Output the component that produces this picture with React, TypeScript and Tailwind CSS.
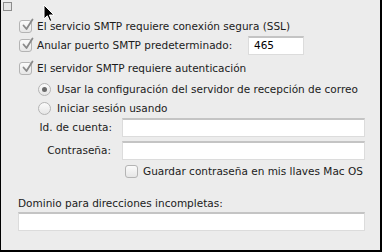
import React from "react";

const Check = ({ checked }: { checked?: boolean }) => (
  <span className="relative flex h-[13px] w-[13px] shrink-0 items-center justify-center rounded-[3px] border border-[#b4b4b4] bg-gradient-to-b from-[#fbfbfb] to-[#e6e6e6]">
    {checked && (
      <svg viewBox="0 0 14 14" className="absolute -top-[3px] left-[1px] h-[14px] w-[14px]">
        <path d="M2.5 7.5 L5.5 11 L11.5 1.5" fill="none" stroke="#8a8a8a" strokeWidth="1.8" strokeLinecap="round" strokeLinejoin="round" />
      </svg>
    )}
  </span>
);

const Radio = ({ checked }: { checked?: boolean }) => (
  <span className="flex h-[13px] w-[13px] shrink-0 items-center justify-center rounded-full border border-[#b4b4b4] bg-gradient-to-b from-[#fbfbfb] to-[#e6e6e6]">
    {checked && <span className="h-[5px] w-[5px] rounded-full bg-[#6a6a6a]" />}
  </span>
);

const Field = ({ className, value }: { className: string; value?: string }) => (
  <div className={`h-[19px] shrink-0 border border-[#dcdcdc] border-t-2 border-t-[#c4c4c4] bg-white px-[5px] text-[10.5px] leading-[15px] text-black ${className}`}>
    {value}
  </div>
);

export default function App() {
  return (
    <div
      className="relative h-[252px] w-[382px] overflow-hidden border-b-2 border-l border-r-2 border-black bg-[#ececec] text-[10.5px] text-[#1b1b1b]"
      style={{ fontFamily: '"DejaVu Sans", Verdana, sans-serif' }}
    >
      <div className="absolute left-[2px] top-[2px] h-[9px] w-[9px] border border-[#8c8c8c] bg-[#e4e4e4]" />
      <svg viewBox="0 0 12 19" className="absolute left-[42px] top-[4px] h-[19px] w-[12px]">
        <path d="M1 1 L1 15 L4.3 11.8 L6.8 17.5 L8.8 16.6 L6.4 11 L11 11 Z" fill="#000" stroke="#fff" strokeWidth="1" strokeLinejoin="round" />
      </svg>

      <div className="flex flex-col pl-[18px] pt-[19px]">
        <div className="flex h-[15px] items-center gap-[5px]">
          <Check checked />
          <span>El servicio SMTP requiere conexión segura (SSL)</span>
        </div>
        <div className="mt-[2px] flex h-[19px] items-center">
          <Check checked />
          <span className="ml-[5px] w-[211px]">Anular puerto SMTP predeterminado:</span>
          <Field className="w-[56px]" value="465" />
        </div>
        <div className="mt-[6px] flex h-[15px] items-center gap-[5px]">
          <Check checked />
          <span>El servidor SMTP requiere autenticación</span>
        </div>
        <div className="ml-[19px] mt-[6px] flex h-[15px] items-center gap-[6px]">
          <Radio checked />
          <span>Usar la configuración del servidor de recepción de correo</span>
        </div>
        <div className="ml-[19px] mt-[4px] flex h-[15px] items-center gap-[6px]">
          <Radio />
          <span>Iniciar sesión usando</span>
        </div>
        <div className="mt-[2px] flex h-[19px] items-center">
          <span className="w-[93px] text-right">Id. de cuenta:</span>
          <Field className="ml-[10px] w-[243px]" />
        </div>
        <div className="mt-[4px] flex h-[19px] items-center">
          <span className="w-[92px] text-right">Contraseña:</span>
          <Field className="ml-[11px] w-[243px]" />
        </div>
        <div className="ml-[106px] mt-[4px] flex h-[15px] items-center gap-[5px]">
          <Check />
          <span>Guardar contraseña en mis llaves Mac OS</span>
        </div>
        <div className="-ml-[1px] mt-[17px] h-[15px] leading-[15px]">Dominio para direcciones incompletas:</div>
        <Field className="-ml-[1px] mt-[1px] w-[347px]" />
      </div>
    </div>
  );
}
